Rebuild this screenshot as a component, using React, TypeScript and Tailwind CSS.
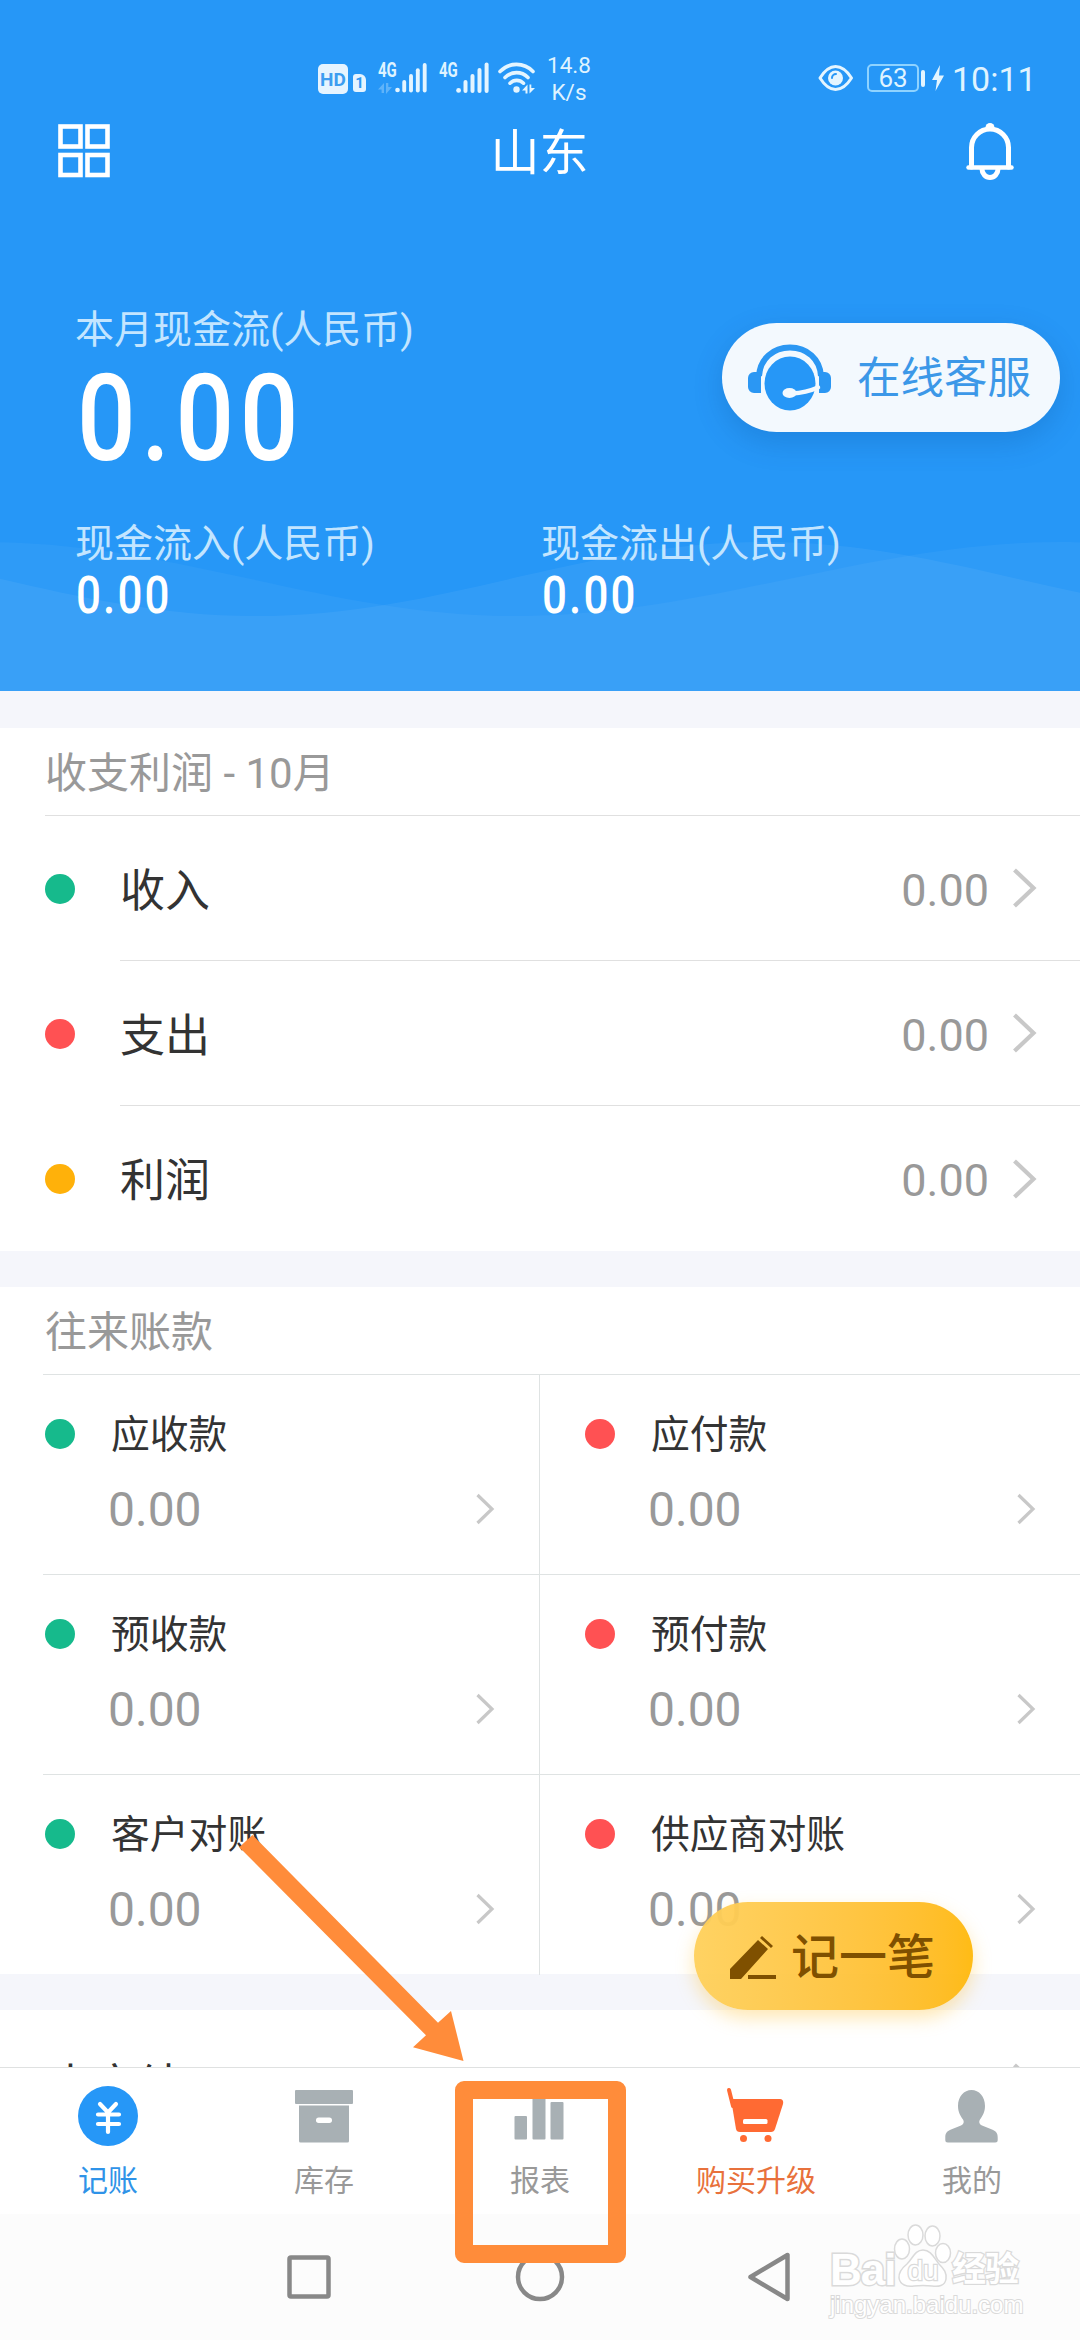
import React from 'react';

type Tone = 'green' | 'red' | 'yellow';

const toneClass: Record<Tone, string> = {
  green: 'bg-[#16ba8c]',
  red: 'bg-[#ff5153]',
  yellow: 'bg-[#ffb10a]',
};

const profitRows: { label: string; value: string; tone: Tone }[] = [
  { label: '收入', value: '0.00', tone: 'green' },
  { label: '支出', value: '0.00', tone: 'red' },
  { label: '利润', value: '0.00', tone: 'yellow' },
];

const accounts: { label: string; value: string; tone: Tone }[] = [
  { label: '应收款', value: '0.00', tone: 'green' },
  { label: '应付款', value: '0.00', tone: 'red' },
  { label: '预收款', value: '0.00', tone: 'green' },
  { label: '预付款', value: '0.00', tone: 'red' },
  { label: '客户对账', value: '0.00', tone: 'green' },
  { label: '供应商对账', value: '0.00', tone: 'red' },
];

const Dot = ({ tone }: { tone: Tone }) => (
  <span className={`h-[30px] w-[30px] shrink-0 rounded-full ${toneClass[tone]}`} />
);

const RowChevron = () => (
  <svg width="26" height="42" viewBox="0 0 26 42" fill="none">
    <path d="M3.500 3l19 18-19 18" stroke="#c8c8c8" strokeWidth="4.200" />
  </svg>
);

const SignalBars = () => (
  <svg width="34" height="32" viewBox="0 0 34 32" fill="#e4f5ff">
    <circle cx="2.6" cy="28.4" r="2.4" />
    <rect x="7.5" y="18" width="4" height="13" rx="2" />
    <rect x="14.5" y="12" width="4" height="19" rx="2" />
    <rect x="21.5" y="6" width="4" height="25" rx="2" />
    <rect x="28.6" y="0.5" width="4" height="30.5" rx="2" />
  </svg>
);

const DataArrows = ({ className }: { className?: string }) => (
  <svg width="14" height="11" viewBox="0 0 14 11" fill="#e4f5ff" className={className}>
    <path d="M6 0v10H3.6V6.6H0zM8 0h2.3v4H14L8 11z" />
  </svg>
);

const StatusBar = () => (
  <div className="flex h-[112px] items-start text-[#dff3ff]">
    <div className="mt-[64px] ml-[318px] flex h-[30px] w-[30px] items-center justify-center rounded-[5px] bg-[#e6f4ff] text-[19px] leading-none font-bold text-[#3d9df0]">
      HD
    </div>
    <div className="mt-[74px] ml-[5px] flex h-[18px] w-[13px] items-center justify-center rounded-[3px] rounded-tr-[6px] bg-[#e6f4ff] text-[15px] leading-none font-bold text-[#2f98f3]">
      1
    </div>
    <div className="mt-[62px] ml-[12px] flex h-[32px] w-[50px]">
      <div className="flex w-[17px] flex-col">
        <span className="origin-left scale-x-[0.75] text-[20px] leading-[16px] font-bold">4G</span>
        <DataArrows className="mt-[5px] opacity-30" />
      </div>
      <SignalBars />
    </div>
    <div className="mt-[62px] ml-[11px] flex h-[32px] w-[51px]">
      <div className="w-[17px]">
        <span className="block origin-left scale-x-[0.75] text-[20px] leading-[16px] font-bold">4G</span>
      </div>
      <SignalBars />
    </div>
    <svg className="mt-[62px] ml-[8px]" width="38" height="32" viewBox="0 0 38 32" fill="none">
      <g stroke="#e4f5ff" strokeWidth="3.6" strokeLinecap="round">
        <path d="M2 9.5C11 0 26 0 35 9.5" />
        <path d="M7 15.5c6.500-6.500 16.500-6.500 23 0" />
        <path d="M12 21.200c4-3.800 9.500-3.800 13.500 0" />
      </g>
      <circle cx="18.500" cy="27.500" r="3.200" fill="#e4f5ff" />
      <path d="M29.500 22.500v9h-2v-3H24zM31.500 22.500h1.800V26H37l-5.500 5.500z" fill="#e4f5ff" />
    </svg>
    <div className="mt-[52px] ml-[10px] w-[46px] text-center text-[22.500px] leading-[27px] whitespace-nowrap">
      <div>14.8</div>
      <div>K/s</div>
    </div>
    <svg className="mt-[64px] ml-[226px]" width="36" height="28" viewBox="0 0 36 28" fill="none">
      <path
        d="M2 14C7 6 12 2.500 17.500 2.500S28.500 6 33.500 14C28.500 22 23 25.500 17.500 25.500S7 22 2 14z"
        stroke="#e4f5ff"
        strokeWidth="3"
        strokeLinejoin="round"
      />
      <circle cx="17.500" cy="14" r="7.500" fill="#e4f5ff" />
      <path d="M14 14a4 4 0 0 1 4-4" stroke="#2697f7" strokeWidth="2" strokeLinecap="round" />
    </svg>
    <div className="mt-[64px] ml-[13px] flex h-[28px] w-[52px] items-center justify-center rounded-[5px] border-2 border-[#8fd3ff] text-[26px] leading-none">
      63
    </div>
    <div className="mt-[70px] ml-[2px] h-[17px] w-[4px] rounded-sm bg-[#e4f5ff]" />
    <svg className="mt-[65px] ml-[7px]" width="12" height="27" viewBox="0 0 12 27" fill="#e4f5ff">
      <path d="M8 0L0 15h5L3.500 26 12 10.500H7z" />
    </svg>
    <div className="mt-[59px] ml-[8px] text-[34px] leading-[40px]">10:11</div>
  </div>
);

const HeadsetIcon = () => (
  <svg width="84" height="68" viewBox="0 0 84 68" fill="none">
    <path d="M11 32C12 15 25 3.500 42 3.500S72 15 73 32" stroke="#2b97f3" strokeWidth="6" />
    <path d="M6 28h7v21H6a6 6 0 0 1-6-6v-9a6 6 0 0 1 6-6zM71 28h6a6 6 0 0 1 6 6v9a6 6 0 0 1-6 6h-6z" fill="#2b97f3" />
    <ellipse cx="42" cy="39.500" rx="25.500" ry="27" fill="#2697f7" />
    <path d="M44 49.500c10-.5 17-2 26-6" stroke="#f3f9fe" strokeWidth="4.500" strokeLinecap="round" />
    <ellipse cx="41.500" cy="49" rx="7" ry="5" fill="#f3f9fe" />
  </svg>
);

const Header = () => (
  <header className="relative h-[691px] shrink-0 overflow-hidden bg-[#2697f7]">
    <svg className="absolute top-0 left-0" width="1080" height="691" viewBox="0 0 1080 691" fill="#fff">
      <path
        fillOpacity="0.04"
        d="M-14 542C176 542 326 616 516 616S870 542 1060 542c10 0 20 .3 30 1V691H-14z"
      />
      <path
        fillOpacity="0.055"
        d="M-253 542C-66 542 68 616 255 616S577 542 764 542 1086 616 1273 616V691H-253z"
      />
    </svg>
    <div className="relative">
      <StatusBar />
      <div className="flex h-[80px] items-center justify-between pr-[66px] pb-[2px] pl-[58px]">
        <svg width="52" height="54" viewBox="0 0 52 54" fill="none" stroke="#fff" strokeWidth="4.600">
          <rect x="2.500" y="2.500" width="20" height="20" />
          <rect x="29.500" y="2.500" width="20" height="20" />
          <rect x="2.500" y="31" width="20" height="20" />
          <rect x="29.500" y="31" width="20" height="20" />
        </svg>
        <h1 className="mt-[5px] ml-[3px] text-[49px] leading-none text-white">山东</h1>
        <svg width="48" height="60" viewBox="0 0 48 60" fill="none" stroke="#fff" strokeWidth="5" strokeLinecap="round">
          <path d="M5.500 46V26.500a18.500 18.500 0 0 1 37 0V46" />
          <path d="M2.500 46.500h43" strokeWidth="4.500" />
          <path d="M16 48a8 8.500 0 0 0 16 0" />
          <path d="M19.500 6.500a4.500 4.500 0 0 1 9 0z" fill="#fff" stroke="none" />
        </svg>
      </div>
      <div className="flex items-start justify-between pr-5 pl-[75px]">
        <div className="mt-[115px]">
          <div className="h-[46px] text-[39px] leading-[46px] text-[#c3e5ff]">本月现金流(人民币)</div>
          <div className="mt-[8px] ml-[2px] h-[116px] origin-left scale-x-[0.86] text-[120px] leading-[116px] font-medium tracking-[6.500px] text-white">
            0.00
          </div>
        </div>
        <button className="mt-[131px] flex h-[109px] w-[338px] items-center rounded-full bg-[#f3f9fe] pl-[26px] shadow-[0_10px_30px_rgba(0,60,130,0.2)]">
          <HeadsetIcon />
          <span className="mt-[3px] ml-[25px] text-[43.500px] leading-none text-[#3c98e8]">在线客服</span>
        </button>
      </div>
      <div className="mt-[44px] grid grid-cols-2">
        {['现金流入(人民币)', '现金流出(人民币)'].map((label, i) => (
          <div key={label} className={i === 0 ? 'pl-[75px]' : 'pl-[1px]'}>
            <div className="text-[39px] leading-[46px] text-[#c3e5ff]">{label}</div>
            <div className="mt-[2px] ml-[1px] origin-left scale-x-[0.86] text-[51px] leading-[54px] font-medium tracking-[2.500px] text-white">
              0.00
            </div>
          </div>
        ))}
      </div>
    </div>
  </header>
);

const ProfitSection = () => (
  <section className="mt-[37px] h-[523px] shrink-0 bg-white">
    <div className="ml-[45px] flex h-[88px] items-center border-b border-[#e0e0e0] pt-[5px] text-[42px] leading-none text-[#999]">
      收支利润 - 10月
    </div>
    {profitRows.map((row, i) => (
      <div key={row.label} className="flex h-[145px] items-center pl-[45px]">
        <Dot tone={row.tone} />
        <div
          className={`ml-[45px] flex h-full flex-1 items-center justify-between pr-[43px] ${
            i < profitRows.length - 1 ? 'border-b border-[#e0e0e0]' : ''
          }`}
        >
          <span className="mt-[6px] text-[45px] leading-none text-[#333]">{row.label}</span>
          <div className="flex items-center gap-[22px] text-[#999]">
            <span className="mt-[4px] text-[45px] leading-none">{row.value}</span>
            <RowChevron />
          </div>
        </div>
      </div>
    ))}
  </section>
);

const AccountSection = () => (
  <section className="mt-[36px] h-[687px] shrink-0 bg-white">
    <div className="ml-[43px] flex h-[88px] items-center border-b border-[#dfe3e3] pt-[5px] pl-[2px] text-[42px] leading-none text-[#999]">
      往来账款
    </div>
    <div className="grid grid-cols-2">
      {accounts.map((item, i) => (
        <div key={item.label} className={`h-[200px] ${i % 2 === 0 ? 'border-r border-[#dfe3e3] pl-[43px]' : ''}`}>
          <div
            className={`h-full ${i % 2 === 0 ? 'pl-[2px]' : 'pl-[45px]'} ${
              i < 4 ? 'border-b border-[#dfe3e3]' : ''
            }`}
          >
            <div className="flex h-[60px] items-center pt-[58px]">
              <Dot tone={item.tone} />
              <span className="mt-[2px] ml-[36px] text-[38.800px] leading-none text-[#333]">{item.label}</span>
            </div>
            <div className="mt-[46px] flex h-[56px] items-center justify-between pr-[42px] pl-[63px]">
              <span className="mt-[2px] text-[48px] leading-none text-[#999]">{item.value}</span>
              <svg width="22" height="34" viewBox="0 0 22 34" fill="none">
                <path d="M2.500 3L17 17 2.500 31" stroke="#c8c8c8" strokeWidth="3.200" />
              </svg>
            </div>
          </div>
        </div>
      ))}
    </div>
  </section>
);

const tabs = [
  {
    label: '记账',
    color: 'text-[#2f93e8]',
    icon: (
      <svg width="60" height="60" viewBox="0 0 60 60" fill="none">
        <circle cx="30" cy="30" r="30" fill="#2697f7" />
        <path
          d="M22 18l8 8.500 8-8.500M30 27v19M20 28.500h21M20 38h21"
          stroke="#fff"
          strokeWidth="4.200"
          strokeLinecap="round"
        />
      </svg>
    ),
  },
  {
    label: '库存',
    color: 'text-[#999]',
    icon: (
      <svg width="60" height="60" viewBox="0 0 60 60" fill="#a8b0b4">
        <rect x="1" y="4" width="58" height="14" rx="1" />
        <path d="M5 19.500h50V55a1.500 1.500 0 0 1-1.500 1.500h-47A1.500 1.500 0 0 1 5 55z" />
        <rect x="22" y="31.500" width="16" height="5.500" rx="2.700" fill="#fff" />
      </svg>
    ),
  },
  {
    label: '报表',
    color: 'text-[#999]',
    icon: (
      <svg width="60" height="60" viewBox="0 0 60 60" fill="#a8b0b4">
        <rect x="4.500" y="30" width="12.500" height="23.500" rx="1" />
        <rect x="22.500" y="8" width="13" height="45.500" rx="1" />
        <rect x="40.500" y="16" width="13" height="37.500" rx="1" />
      </svg>
    ),
  },
  {
    label: '购买升级',
    color: 'text-[#e8713c]',
    icon: (
      <svg width="60" height="60" viewBox="0 0 60 60" fill="#ff6a33">
        <path d="M3 4l4 16" stroke="#ff6a33" strokeWidth="4" strokeLinecap="round" />
        <path d="M5 13h49q4 .5 3 5l-8 25q-1 3-4 3H14q-3.500 0-4-3z" />
        <rect x="17" y="33" width="24.500" height="5" rx="1.500" fill="#fff" />
        <circle cx="17.500" cy="52.500" r="3.500" />
        <circle cx="42" cy="52.500" r="3.500" />
      </svg>
    ),
  },
  {
    label: '我的',
    color: 'text-[#999]',
    icon: (
      <svg width="60" height="60" viewBox="0 0 60 60" fill="#a8b0b4">
        <path d="M29.500 4C37 4 43 10.500 43 20c0 6-2.500 10-5 13.500-1.500 2.500-.5 5 2 6l10 4c4.500 2 5.700 4 5.700 8V54q0 2.500-2.500 2.500H5.800Q3.300 56.500 3.300 54v-2.500c0-4 1.200-6 5.700-8l10-4c2.500-1 3.500-3.500 2-6C18.500 30 16 26 16 20 16 10.500 22 4 29.500 4z" />
      </svg>
    ),
  },
];

const TabBar = () => (
  <nav className="absolute top-[2067px] left-0 grid h-[147px] w-full grid-cols-5 border-t border-[#dfe1e1] bg-white">
    {tabs.map((tab) => (
      <div key={tab.label} className="flex flex-col items-center pt-[18px]">
        {tab.icon}
        <span className={`mt-[20px] text-[30px] leading-[30px] ${tab.color}`}>{tab.label}</span>
      </div>
    ))}
  </nav>
);

const SystemNav = () => (
  <div className="absolute top-[2214px] left-0 flex h-[126px] w-full items-center bg-[#fcfcfc]">
    <svg className="ml-[284px]" width="50" height="50" viewBox="0 0 50 50" fill="none">
      <rect x="5.500" y="5.500" width="39" height="39" rx="1.500" stroke="#888" strokeWidth="4.500" />
    </svg>
    <svg className="ml-[181px]" width="50" height="50" viewBox="0 0 50 50" fill="none">
      <circle cx="25" cy="25" r="22" stroke="#888" strokeWidth="4.500" />
    </svg>
    <svg className="ml-[181px]" width="50" height="54" viewBox="0 0 50 54" fill="none">
      <path d="M4.500 27L41.500 5v44z" stroke="#888" strokeWidth="4.500" strokeLinejoin="round" />
    </svg>
  </div>
);

const Watermark = () => (
  <div className="absolute top-[2222px] left-[828px] h-[100px] w-[200px] text-white">
    <span className="absolute top-[26px] left-[2px] font-['Liberation_Sans'] text-[44px] leading-[44px] font-bold tracking-[-1px] [-webkit-text-stroke:3px_#dadada] [paint-order:stroke]">
      Bai
    </span>
    <svg className="absolute top-0 left-[65px]" width="62" height="68" viewBox="0 0 62 68" fill="#fff" stroke="#dadada" strokeWidth="1.500">
      <ellipse cx="9" cy="27" rx="7.500" ry="10" />
      <ellipse cx="22.500" cy="13" rx="7.500" ry="10" />
      <ellipse cx="39.500" cy="14" rx="7.500" ry="10" />
      <ellipse cx="50" cy="31" rx="7.500" ry="9.500" />
      <path d="M30 28c8 0 11 8 16 14 5 5 8 9 7 15-1 7-8 8-14 7-6-.8-12-.8-18 0-7 1-14-1-15-8-.6-6 3-10 8-14 6-6 8-14 16-14z" />
      <text x="30" y="58" textAnchor="middle" fontSize="28" fontFamily="Liberation Sans" strokeWidth="2.500" paintOrder="stroke">
        du
      </text>
    </svg>
    <span className="absolute top-[29px] left-[124px] text-[34px] leading-[36px] font-bold tracking-[-1px] whitespace-nowrap [-webkit-text-stroke:2.500px_#dadada] [paint-order:stroke]">
      经验
    </span>
    <span className="absolute top-[69px] left-[2px] font-['Liberation_Sans'] text-[24px] leading-[28px] [-webkit-text-stroke:2px_#dadada] [paint-order:stroke]">
      jingyan.baidu.com
    </span>
  </div>
);

const App: React.FC = () => {
  return (
    <div className="relative flex h-[2340px] w-[1080px] flex-col overflow-hidden bg-[#f5f6fb] font-[Roboto,'Noto_Sans_CJK_SC',sans-serif]">
      <Header />
      <ProfitSection />
      <AccountSection />

      {/* Next section, cut off by the tab bar */}
      <section className="mt-[36px] flex h-[200px] shrink-0 items-start justify-between bg-white pt-[50px] pr-[43px] pl-[48px]">
        <span className="text-[45px] leading-[53px] text-[#333]">未完结</span>
        <div className="mt-[2px]">
          <RowChevron />
        </div>
      </section>

      <button className="absolute top-[1902px] left-[694px] flex h-[108px] w-[279px] items-center rounded-full bg-linear-to-r from-[#ffd05a]/95 to-[#ffb808]/95 pl-[36px] text-[#7f5000] shadow-[0_8px_18px_rgba(255,190,40,0.35)]">
        <svg className="mt-[3px]" width="47" height="44" viewBox="0 0 47 44" fill="currentColor">
          <path d="M0 33L28 4l10 9L11 43H0zM30 2l2-2 11 10-2 2z" />
          <rect x="18" y="39" width="28" height="4" />
        </svg>
        <span className="mt-[4px] ml-[14px] text-[48px] leading-none font-medium">记一笔</span>
      </button>

      <TabBar />
      <SystemNav />
      <Watermark />

      {/* Pointer to the report tab */}
      <div className="absolute top-[2081px] left-[455px] h-[182px] w-[171px] rounded-[9px] border-[18px] border-[#ff8c3a]" />
      <svg className="absolute top-[1830px] left-[235px]" width="235" height="235" viewBox="235 1830 235 235">
        <path d="M239.300 1847.300L252.400 1835 438 2022.700 451 2011 463.500 2061 413 2047.300 426 2035.300z" fill="#ff8c3a" />
      </svg>
    </div>
  );
};

export default App;
